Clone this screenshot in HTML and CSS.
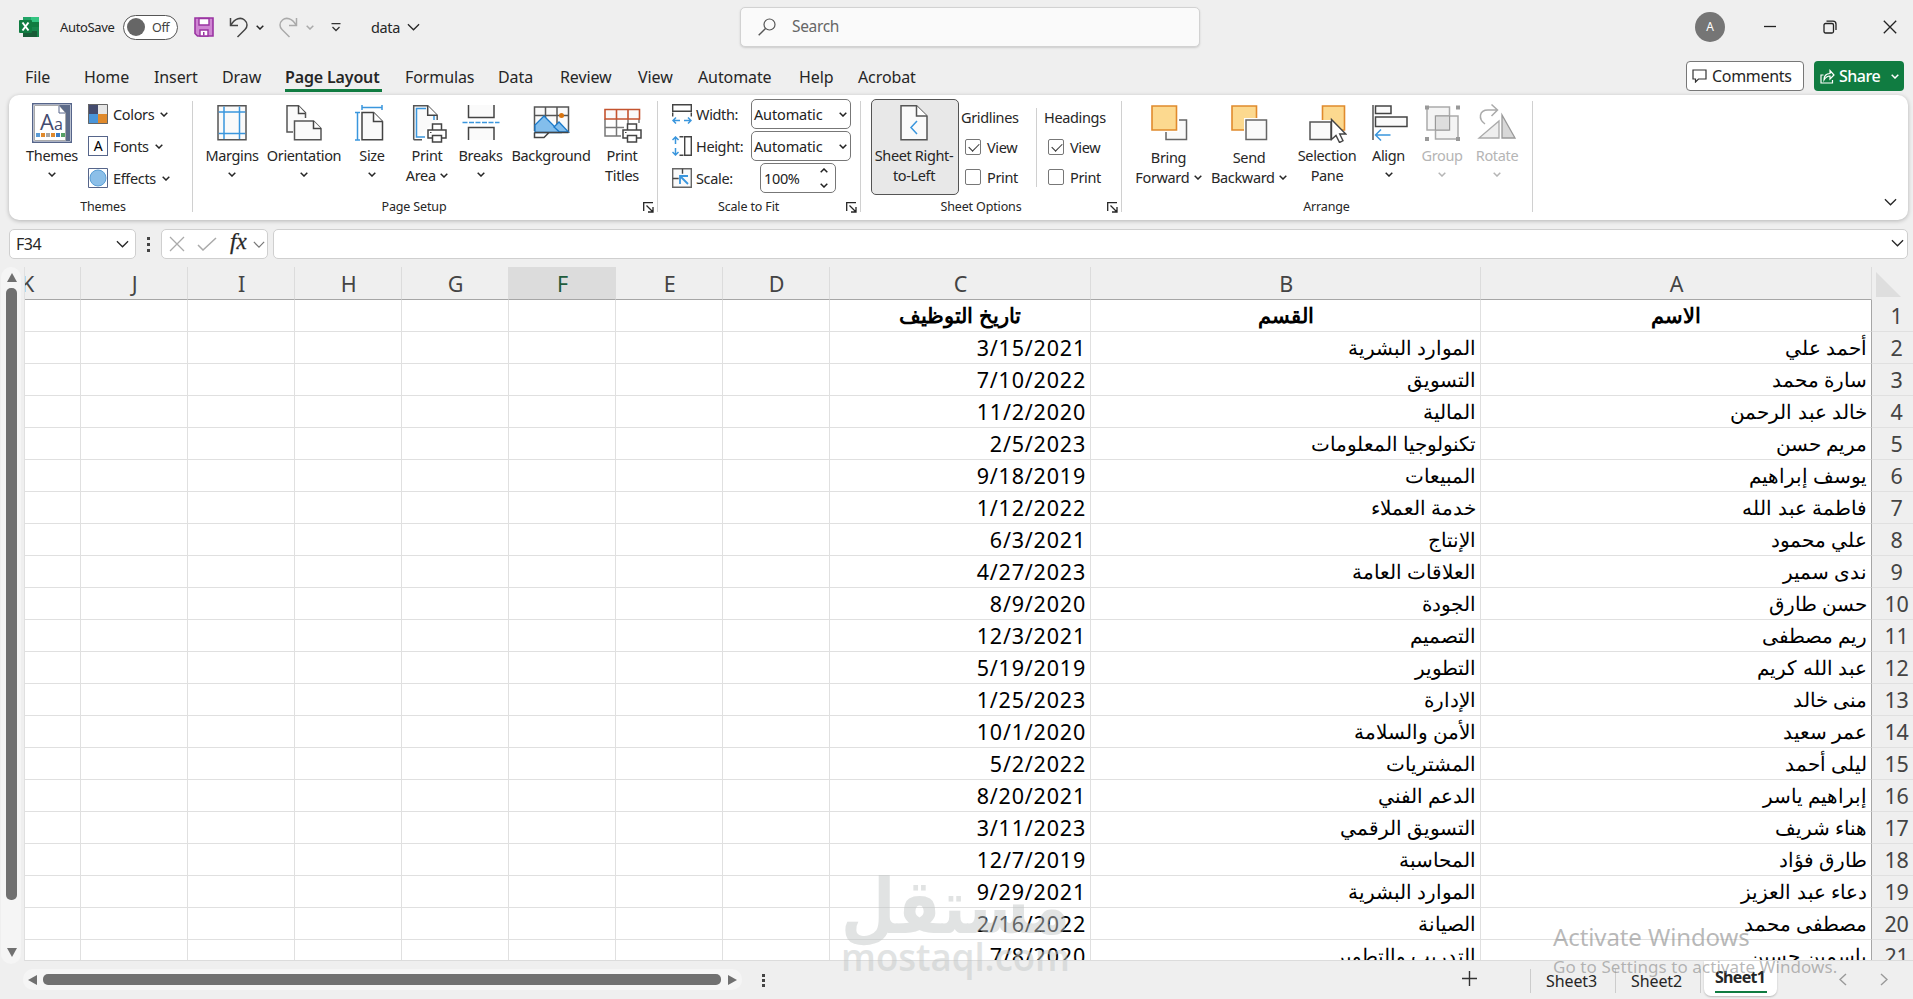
FILE: index.html
```html
<!DOCTYPE html>
<html lang="en">
<head>
    <meta charset="UTF-8">
    <meta name="viewport" content="width=device-width, initial-scale=1.0">
    <title>data - Excel</title>
    <link rel="stylesheet" href="styles.css">
</head>
<body>
    <svg class="defs" width="0" height="0">
        <symbol id="chev" viewBox="0 0 8 5"><path d="M.7.7 4 4 7.3.7" fill="none" stroke="currentColor" stroke-width="1.5"/></symbol>
        <symbol id="chev-lg" viewBox="0 0 14 8"><path d="M1 1l6 6 6-6" fill="none" stroke="currentColor" stroke-width="1.4"/></symbol>
        <symbol id="launcher" viewBox="0 0 11 11"><path d="M.7 9V.7H10M3.5 3.5l6 6M10 5v5H5" fill="none" stroke="currentColor" stroke-width="1.3"/></symbol>
        <symbol id="printer" viewBox="0 0 20 20"><path d="M5.5 1h9v6h-9zM1 7h18v8H1z" fill="#fff" stroke="#444" stroke-width="1.5"/><path d="M5.5 12.5h9V19h-9z" fill="#fff" stroke="#444" stroke-width="1.5"/><path d="M3 9.5h1.5" stroke="#444"/></symbol>
    </svg>

    <div class="titlebar">
        <svg class="logo" width="20" height="20" viewBox="0 0 20 20"><path fill="#21a366" d="M4 0h16v10H4z"/><path fill="#33c481" d="M12 0h8v5h-8z"/><path fill="#107c41" d="M12 5h8v5h-8zM4 10h8v5H4z"/><path fill="#185c37" d="M4 13h16v7H4z"/><path fill="#17864c" d="M12 10h8v10h-2V14h-6z"/><rect y="3" width="13" height="13" rx="1" fill="#107c41"/><path d="M3.500 5.500l6 8M9.500 5.500l-6 8" stroke="#fff" stroke-width="2"/></svg>
        <span class="autosave">AutoSave</span>
        <span class="toggle"><i></i>Off</span>
        <svg class="save" width="20" height="20" viewBox="0 0 20 20"><path d="M1 1h18v18H3.500L1 16.500z" fill="#cf86d3" stroke="#9a35a2" stroke-width="1.600"/><path d="M5 1.500h10V8H5zM6 13h8v6H6z" fill="#fff" stroke="#9a35a2" stroke-width="1.400"/><path d="M9 15h1.500v3.500H9z" fill="#9a35a2"/></svg>
        <svg class="undo" width="20" height="21" viewBox="0 0 20 21"><path d="M1.500 1v7.500H9M2 8C6 1 12 0 15.500 3s3 7 .5 9.500L8.500 20" fill="none" stroke="#444" stroke-width="1.500"/></svg>
        <svg class="undo-chev" width="8" height="5"><use href="#chev"/></svg>
        <svg class="redo" width="20" height="21" viewBox="0 0 20 21"><path d="M18.500 1v7.500H11M18 8C14 1 8 0 4.500 3s-3 7-.5 9.500l7.500 7.500" fill="none" stroke="#aaa" stroke-width="1.500"/></svg>
        <svg class="redo-chev" width="8" height="5"><use href="#chev"/></svg>
        <svg class="customize" width="10" height="9" viewBox="0 0 10 9"><path d="M.5.7h9M1.500 4 5 7.500 8.500 4" fill="none" stroke="#333" stroke-width="1.300"/></svg>
        <span class="doc-name">data</span>
        <svg class="doc-chev" width="13" height="8"><use href="#chev-lg"/></svg>
        <div class="search">
            <svg width="18" height="18" viewBox="0 0 18 18"><circle cx="11.500" cy="6.500" r="5.500" fill="none" stroke="#555" stroke-width="1.200"/><path d="M7.500 10.500.7 17.300" stroke="#555" stroke-width="1.400"/></svg>
            <span>Search</span>
        </div>
        <div class="window-controls">
            <span class="avatar">A</span>
            <svg width="14" height="14" viewBox="0 0 14 14"><path d="M1 6.500h12"/></svg>
            <svg width="14" height="14" viewBox="0 0 14 14"><rect x="1" y="3.500" width="9.500" height="9.500" rx="1.500"/><path d="M3.500 1.200H10a3 3 0 0 1 3 3V10"/></svg>
            <svg width="14" height="14" viewBox="0 0 14 14"><path d="M.8.800l12.400 12.400M13.200.8.800 13.200"/></svg>
        </div>
    </div>

    <div class="tabs">
        <div class="tab-list">
            <span>File</span><span>Home</span><span>Insert</span><span>Draw</span><span class="active"><b>Page Layout</b></span><span>Formulas</span><span>Data</span><span>Review</span><span>View</span><span>Automate</span><span>Help</span><span>Acrobat</span>
        </div>
        <div class="comments">
            <svg width="15" height="14" viewBox="0 0 15 14"><path d="M1 1h13v9H6.500L3.500 13v-3H1z" fill="none" stroke="#333" stroke-width="1.200"/></svg>Comments
        </div>
        <div class="share">
            <svg width="15" height="15" viewBox="0 0 15 15"><path d="M3.500 6H1v8h11.500v-3M4 11c0-4 2-6.500 6-6.500V1.500L14 6l-4 4V7C7 7 5.500 8.500 4 11z" fill="none" stroke="#fff" stroke-width="1.200"/></svg>Share
            <svg class="chev" width="8" height="5"><use href="#chev"/></svg>
        </div>
    </div>

    <div class="ribbon">
        <div class="group g-themes">
            <div class="items">
                <div class="big w-themes">
                    <svg width="40" height="40" viewBox="0 0 40 40"><path d="M.7.700h38.600v38.600H.7z" fill="#fff" stroke="#56658a" stroke-width="1.400"/><path d="M27 2h11v36h-5V10z" fill="#5d6b89"/><path d="M2.500 37.500V2.500H27l6.500 7.500v27.500z" fill="#fff" stroke="#aaa"/><path d="M27 2l7 8v28h4V2z" fill="#5d6b89"/><path d="M27 3v7h6" fill="#fff" stroke="#56658a"/><text x="8" y="27" class="aa">A</text><text x="22" y="27" class="aa-sm">a</text><path d="M4 30h4v4H4z" fill="#5b9bd5"/><path d="M9 30h4v4H9zM19 30h4v4h-4z" fill="#e08a2c"/><path d="M14 30h4v4h-4z" fill="#a5a5a5"/><path d="M24 30h4v4h-4z" fill="#3c7cc4"/><path d="M29 30h4v4h-4z" fill="#56a065"/></svg>
                    <span>Themes</span><svg class="chev" width="8" height="5"><use href="#chev"/></svg>
                </div>
                <div class="small-list">
                    <div><svg width="20" height="20" viewBox="0 0 20 20"><path d="M0 0h10v10H0z" fill="#444b6e"/><path d="M10 0h10v10H10z" fill="#e6e6e6"/><path d="M0 10h10v10H0z" fill="#4a95d9"/><path d="M10 10h10v10H10z" fill="#e08a2c"/><path d="M.5.500h19v19H.500z" fill="none" stroke="#666"/></svg>Colors<svg class="chev" width="8" height="5"><use href="#chev"/></svg></div>
                    <div><span class="font-icon">A</span>Fonts<svg class="chev" width="8" height="5"><use href="#chev"/></svg></div>
                    <div><svg width="20" height="20" viewBox="0 0 20 20"><path d="M.5.500h19v19H.500z" fill="#fff" stroke="#56658a"/><circle cx="10" cy="10" r="8" fill="#8cbfe8" stroke="#5a9fd6"/></svg>Effects<svg class="chev" width="8" height="5"><use href="#chev"/></svg></div>
                </div>
            </div>
            <div class="caption">Themes</div>
        </div>

        <div class="group g-setup">
            <div class="items">
                <div class="big w-margins">
                    <svg width="40" height="40" viewBox="0 0 40 40"><path d="M6 2.700h28v34H6z" fill="#fafafa" stroke="#555" stroke-width="1.500"/><path d="M12 3.500v32.500M27.500 3.500v32.500M6.700 9h26.600M6.700 30.500h26.600" stroke="#3a96dd" stroke-width="1.500"/></svg>
                    <span>Margins</span><svg class="chev" width="8" height="5"><use href="#chev"/></svg>
                </div>
                <div class="big w-orient">
                    <svg width="40" height="40" viewBox="0 0 40 40"><path d="M9 29H3V2.700h11.500l7 7V15" fill="#fafafa" stroke="#555" stroke-width="1.500"/><path d="M14.500 2.700v7.800h7" fill="#fff" stroke="#444" stroke-width="1.500"/><path d="M10.500 18h19l7.500 7.500v11.200H10.500z" fill="#fafafa" stroke="#555" stroke-width="1.500"/><path d="M29.500 18v7.500H37" fill="#fff" stroke="#444" stroke-width="1.500"/></svg>
                    <span>Orientation</span><svg class="chev" width="8" height="5"><use href="#chev"/></svg>
                </div>
                <div class="big w-size">
                    <svg width="40" height="40" viewBox="0 0 40 40"><path d="M10 9.500h11.500l9 9v18.200H10z" fill="#fafafa" stroke="#444" stroke-width="1.500"/><path d="M21.500 9.500v9h9" fill="#fff" stroke="#444" stroke-width="1.500"/><path d="M10 2v5M30 2v5M10 4.500h20M3 9.500h5M3 37h5M5.500 9.500V37" stroke="#3a96dd" stroke-width="1.500"/></svg>
                    <span>Size</span><svg class="chev" width="8" height="5"><use href="#chev"/></svg>
                </div>
                <div class="big w-area">
                    <svg width="40" height="40" viewBox="0 0 40 40"><path d="M6.700 36.700V2.700h14l9.500 9.500V17M6.700 36.700H15" fill="#fafafa" stroke="#555" stroke-width="1.500"/><path d="M19 5.500H9.500V34H18M27 13v4" fill="none" stroke="#3a96dd" stroke-width="1.500"/><path d="M20.700 2.700v9.500h9.500" fill="#fff" stroke="#444" stroke-width="1.500"/><use href="#printer" x="20" y="20" width="20" height="20"/></svg>
                    <span>Print<br>Area <svg class="chev" width="8" height="5"><use href="#chev"/></svg></span>
                </div>
                <div class="big w-breaks">
                    <svg width="40" height="40" viewBox="0 0 40 40"><path d="M7.500 2v12.500H33V2M7.500 37V24.500H33V37" fill="#fafafa" stroke="#444" stroke-width="1.500"/><path d="M1.500 19.500h37" stroke="#3a96dd" stroke-width="1.500" stroke-dasharray="5 1.500"/></svg>
                    <span>Breaks</span><svg class="chev" width="8" height="5"><use href="#chev"/></svg>
                </div>
                <div class="big w-bg">
                    <svg width="40" height="40" viewBox="0 0 40 40"><path d="M3.500 28V4h34v25.500M14.500 4v12M26 4v18M3.500 12.500h34" fill="#fafafa" stroke="#555" stroke-width="1.500"/><path d="M4 29V22l9-9 16.500 16.500H4z" fill="#83beec" stroke="#1979ca" stroke-width="1.300"/><path d="M23 24l5-5 9.500 10h-9z" fill="#83beec" stroke="#1979ca" stroke-width="1.300"/><circle cx="30.500" cy="12.500" r="2.500" fill="#d8730e"/><path d="M3.500 29.500v5H13l5-5M3.500 29.500h34" fill="none" stroke="#444" stroke-width="1.500"/></svg>
                    <span>Background</span>
                </div>
                <div class="big w-titles">
                    <svg width="40" height="40" viewBox="0 0 40 40"><path d="M3 16v17h16M3 24.500h19M14.500 16v17M26 16v5M37 16v4" fill="none" stroke="#777" stroke-width="1.500"/><path d="M3 6.500h34.500V16H3zM14.500 6.500V16M26 6.500V16" fill="#fafafa" stroke="#c4532f" stroke-width="1.600"/><use href="#printer" x="20" y="20" width="20" height="20"/></svg>
                    <span>Print<br>Titles</span>
                </div>
            </div>
            <div class="caption">Page Setup</div>
            <svg class="launcher" width="11" height="11"><use href="#launcher"/></svg>
        </div>

        <div class="group g-scale">
            <div class="scale-row">
                <svg width="20" height="20" viewBox="0 0 20 20"><path d="M.7.700h18.600v6.600H.700z" fill="#fff" stroke="#444" stroke-width="1.400"/><path d="M.7 8.500v4M19.300 8.500v4" stroke="#444" stroke-width="1.400"/><path d="M1 16.500h7M12 16.500h7M4 13.500l-3 3 3 3M16 13.500l3 3-3 3" fill="none" stroke="#3a96dd" stroke-width="1.500"/></svg>
                <span class="lbl">Width:</span><span class="combo">Automatic<svg class="chev" width="8" height="5"><use href="#chev"/></svg></span>
            </div>
            <div class="scale-row">
                <svg width="20" height="20" viewBox="0 0 20 20"><path d="M12.700.700h6.600v18.600h-6.600z" fill="#fff" stroke="#444" stroke-width="1.400"/><path d="M7.500.700h4M7.500 19.300h4" stroke="#444" stroke-width="1.400"/><path d="M3.500 1v7M3.500 12v7M.5 4l3-3 3 3M.5 16l3 3 3-3" fill="none" stroke="#3a96dd" stroke-width="1.500"/></svg>
                <span class="lbl">Height:</span><span class="combo">Automatic<svg class="chev" width="8" height="5"><use href="#chev"/></svg></span>
            </div>
            <div class="scale-row">
                <svg width="20" height="20" viewBox="0 0 20 20"><path d="M.7.700h18.600v18.600H.700z" fill="#fafafa" stroke="#666" stroke-width="1.400"/><path d="M.7 10.500h6M10.500.700v5" stroke="#444" stroke-width="1.400"/><path d="M8 16V8h8M8 8l8 8" fill="none" stroke="#3a96dd" stroke-width="1.800"/></svg>
                <span class="lbl">Scale:</span>
                <span class="spin">100%<span class="arrows"><svg class="chev up" width="8" height="5"><use href="#chev"/></svg><svg class="chev" width="8" height="5"><use href="#chev"/></svg></span></span>
            </div>
            <div class="caption">Scale to Fit</div>
            <svg class="launcher" width="11" height="11"><use href="#launcher"/></svg>
        </div>

        <div class="group g-sheet">
            <div class="items">
                <div class="big rtl-toggle">
                    <svg width="40" height="40" viewBox="0 0 40 40"><path d="M7 2.700h15.500L33 13v23.700H7z" fill="#fafafa" stroke="#555" stroke-width="1.500"/><path d="M22.500 2.700V13H33" fill="#fff" stroke="#555" stroke-width="1.500"/><path d="M23 18l-6 6.500 6 6.500" fill="none" stroke="#3a96dd" stroke-width="1.500"/></svg>
                    <span>Sheet Right-<br>to-Left</span>
                </div>
                <div class="checks grid-checks">
                    <strong>Gridlines</strong>
                    <div><i class="on"></i>View</div>
                    <div><i></i>Print</div>
                </div>
                <div class="checks head-checks">
                    <strong>Headings</strong>
                    <div><i class="on"></i>View</div>
                    <div><i></i>Print</div>
                </div>
            </div>
            <div class="caption">Sheet Options</div>
            <svg class="launcher" width="11" height="11"><use href="#launcher"/></svg>
        </div>

        <div class="group g-arrange">
            <div class="items">
                <div class="big low w-bring">
                    <svg width="40" height="40" viewBox="0 0 40 40"><path d="M17 17h20.500v19.500H17z" fill="#fafafa" stroke="#666" stroke-width="1.500"/><path d="M2 1h28v28H2z" fill="#fff"/><path d="M3 3h24.500v24H3z" fill="#fcd98f" stroke="#e08a2c" stroke-width="1.600"/></svg>
                    <span>Bring<br>Forward <svg class="chev" width="8" height="5"><use href="#chev"/></svg></span>
                </div>
                <div class="big low w-send">
                    <svg width="40" height="40" viewBox="0 0 40 40"><path d="M3 3h24.500v24H3z" fill="#fcd98f" stroke="#e08a2c" stroke-width="1.600"/><path d="M15 15h22v22H15z" fill="#fff"/><path d="M17 17h20.500v19.500H17z" fill="#fafafa" stroke="#666" stroke-width="1.500"/></svg>
                    <span>Send<br>Backward <svg class="chev" width="8" height="5"><use href="#chev"/></svg></span>
                </div>
                <div class="big w-select">
                    <svg width="40" height="40" viewBox="0 0 40 40"><path d="M15.500 3H37.500v24H15.500z" fill="#fcd98f" stroke="#e08a2c" stroke-width="1.600"/><path d="M1 17h24v21H1z" fill="#fff"/><path d="M3 19h21v17.500H3z" fill="#fafafa" stroke="#555" stroke-width="1.500"/><path d="M24.500 16.500v20l4.500-4 3.500 7 3.500-1.700-3.300-6.800h6z" fill="#fff" stroke="#444" stroke-width="1.400"/></svg>
                    <span>Selection<br>Pane</span>
                </div>
                <div class="big w-align">
                    <svg width="40" height="40" viewBox="0 0 40 40"><path d="M4 2v35" stroke="#555" stroke-width="1.500"/><path d="M6.500 3h15.500v7.500H6.500zM6.500 14H38v9.500H6.500z" fill="#fafafa" stroke="#444" stroke-width="1.500"/><path d="M6.500 32h15M12 26.500 6.500 32l5.500 5.500" fill="none" stroke="#3a96dd" stroke-width="1.500"/></svg>
                    <span>Align</span><svg class="chev" width="8" height="5"><use href="#chev"/></svg>
                </div>
                <div class="big w-group off">
                    <svg width="40" height="40" viewBox="0 0 40 40"><path d="M5 4h22.500v23H5zM13.500 13H36v23H13.500z" fill="#f0f0f0" fill-opacity=".7" stroke="#aaa" stroke-width="1.500"/><path d="M13.500 13h14v14h-14z" fill="#dedede" stroke="#999"/><path d="M3 2.500h4v4H3zM34 2.500h4v4h-4zM3 34h4v4H3zM34 34h4v4h-4z" fill="#999"/></svg>
                    <span>Group</span><svg class="chev" width="8" height="5"><use href="#chev"/></svg>
                </div>
                <div class="big w-rotate off">
                    <svg width="40" height="40" viewBox="0 0 40 40"><path d="M8 21C1 16 2 7 11 7h9M14.500 1.500 20.500 7l-6 6" fill="none" stroke="#aaa" stroke-width="1.500"/><path d="M22 18v17H2z" fill="#eee" stroke="#aaa" stroke-width="1.300"/><path d="M25 12v23h13z" fill="#d8d8d8" stroke="#999" stroke-width="1.300"/></svg>
                    <span>Rotate</span><svg class="chev" width="8" height="5"><use href="#chev"/></svg>
                </div>
            </div>
            <div class="caption">Arrange</div>
        </div>
        <svg class="collapse" width="13" height="8"><use href="#chev-lg"/></svg>
    </div>

    <div class="formula-bar">
        <div class="name-box">F34<svg width="13" height="8"><use href="#chev-lg"/></svg></div>
        <div class="dots"><i></i><i></i><i></i></div>
        <div class="fx-box">
            <svg width="16" height="16" viewBox="0 0 16 16"><path d="M1 1l14 14M15 1 1 15" stroke="#aaa" stroke-width="1.300"/></svg>
            <svg width="20" height="14" viewBox="0 0 20 14"><path d="M1 8l5 5L19 1" fill="none" stroke="#aaa" stroke-width="1.500"/></svg>
            <em>fx</em>
            <svg class="fx-chev" width="12" height="7"><use href="#chev-lg"/></svg>
        </div>
        <div class="formula"><svg width="13" height="8"><use href="#chev-lg"/></svg></div>
    </div>

    <div class="sheet">
        <div class="vscroll"><i class="tri up"></i><i class="thumb"></i><i class="tri down"></i></div>
        <div class="grid">
            <table>
                <colgroup>
                    <col><col><col><col><col><col><col><col>
                    <col class="col-c"><col class="col-b"><col class="col-a"><col class="col-n">
                </colgroup>
                <thead>
                    <tr><th>K</th><th>J</th><th>I</th><th>H</th><th>G</th><th class="current">F</th><th>E</th><th>D</th><th>C</th><th>B</th><th>A</th><th class="corner"><svg width="25" height="25" viewBox="0 0 25 25"><path d="M0 0v25h25z" fill="#dedede"/></svg></th></tr>
                </thead>
                <tbody id="rows"></tbody>
            </table>
        </div>
    </div>

    <div class="footer">
        <div class="hscroll"><i class="tri left"></i><i class="thumb"></i><i class="tri right"></i></div>
        <div class="dots"><i></i><i></i><i></i></div>
        <svg class="plus" width="15" height="15" viewBox="0 0 15 15"><path d="M7.500 0v15M0 7.500h15" stroke="#333" stroke-width="1.400"/></svg>
        <div class="sheet-tab">Sheet3</div>
        <div class="sheet-tab">Sheet2</div>
        <div class="sheet-tab active"><b>Sheet1</b></div>
        <svg class="prev" width="8" height="13" viewBox="0 0 8 13"><path d="M7 1 1 6.500l6 5.500" fill="none" stroke="#999" stroke-width="1.400"/></svg>
        <svg class="next" width="8" height="13" viewBox="0 0 8 13"><path d="M1 1l6 5.500L1 12" fill="none" stroke="#999" stroke-width="1.400"/></svg>
    </div>

    <div class="watermark">
        <svg width="240" height="125" viewBox="0 0 240 125"><text x="5" y="68" class="wm-ar" textLength="229" lengthAdjust="spacingAndGlyphs">مستقل</text><text x="5" y="106" class="wm-en" textLength="229" lengthAdjust="spacingAndGlyphs">mostaql.com</text></svg>
    </div>
    <div class="activate">
        <div class="activate-title">Activate Windows</div>
        <div class="activate-text">Go to Settings to activate Windows.</div>
    </div>

    <script>
        var data = [
            ['الاسم', 'القسم', 'تاريخ التوظيف'],
            ['أحمد علي', 'الموارد البشرية', '3/15/2021'],
            ['سارة محمد', 'التسويق', '7/10/2022'],
            ['خالد عبد الرحمن', 'المالية', '11/2/2020'],
            ['مريم حسن', 'تكنولوجيا المعلومات', '2/5/2023'],
            ['يوسف إبراهيم', 'المبيعات', '9/18/2019'],
            ['فاطمة عبد الله', 'خدمة العملاء', '1/12/2022'],
            ['علي محمود', 'الإنتاج', '6/3/2021'],
            ['ندى سمير', 'العلاقات العامة', '4/27/2023'],
            ['حسن طارق', 'الجودة', '8/9/2020'],
            ['ريم مصطفى', 'التصميم', '12/3/2021'],
            ['عبد الله كريم', 'التطوير', '5/19/2019'],
            ['منى خالد', 'الإدارة', '1/25/2023'],
            ['عمر سعيد', 'الأمن والسلامة', '10/1/2020'],
            ['ليلى أحمد', 'المشتريات', '5/2/2022'],
            ['إبراهيم ياسر', 'الدعم الفني', '8/20/2021'],
            ['هناء شريف', 'التسويق الرقمي', '3/11/2023'],
            ['طارق فؤاد', 'المحاسبة', '12/7/2019'],
            ['دعاء عبد العزيز', 'الموارد البشرية', '9/29/2021'],
            ['مصطفى محمد', 'الصيانة', '2/16/2022'],
            ['ياسمين حسين', 'التدريب والتطوير', '7/8/2020']
        ];
        var html = '';
        data.forEach(function (row, i) {
            html += '<tr' + (i === 0 ? ' class="head"' : '') + '>' + '<td></td>'.repeat(8) +
                '<td class="date">' + row[2] + '</td>' +
                '<td class="ar">' + row[1] + '</td>' +
                '<td class="ar last">' + row[0] + '</td>' +
                '<td class="num">' + (i + 1) + '</td></tr>';
        });
        document.getElementById('rows').innerHTML = html;
    </script>
</body>
</html>
```
FILE: styles.css
```css
* {
    box-sizing: border-box;
}
body {
    margin: 0;
    width: 1913px;
    height: 999px;
    overflow: hidden;
    position: relative;
    display: flex;
    flex-direction: column;
    background: #efefef;
    color: #262626;
    font-family: "Noto Sans", "Open Sans", sans-serif;
    font-size: 14.5px;
    letter-spacing: -0.35px;
}
svg {
    display: block;
    flex: none;
}
.defs {
    position: absolute;
}

/* title bar */
.titlebar {
    height: 54px;
    display: flex;
    align-items: center;
    padding-left: 19px;
    flex: none;
}
.titlebar > * {
    flex: none;
}
.autosave {
    width: 63px;
    margin-left: 21px;
    font-size: 13px;
    letter-spacing: -0.35px;
}
.toggle {
    width: 55px;
    height: 25px;
    border: 1px solid #555;
    border-radius: 13px;
    background: #fff;
    display: flex;
    align-items: center;
    font-size: 12.5px;
    color: #444;
}
.toggle i {
    width: 18px;
    height: 18px;
    border-radius: 50%;
    background: #666;
    margin: 0 7px 0 3px;
}
.save {
    margin-left: 16px;
}
.undo {
    margin-left: 15px;
}
.undo-chev {
    margin-left: 7px;
}
.redo {
    margin-left: 14px;
}
.redo-chev {
    margin-left: 8px;
    color: #aaa;
}
.customize {
    margin-left: 17px;
}
.doc-name {
    width: 36px;
    margin-left: 30px;
}
.search {
    width: 460px;
    height: 40px;
    margin-left: 320px;
    display: flex;
    align-items: center;
    padding-left: 17px;
    border: 1px solid #d2d2d2;
    border-radius: 5px;
    background: #fafafa;
    box-shadow: 0 1px 2px #ccc;
    font-size: 15.5px;
    color: #666;
    margin-top: -1px;
}
.search span {
    margin-left: 16px;
    margin-top: -1px;
}
.window-controls {
    display: flex;
    align-items: center;
    margin-left: 495px;
}
.window-controls svg {
    fill: none;
    stroke: #222;
    stroke-width: 1.3;
    margin-right: 46px;
}
.avatar {
    width: 30px;
    height: 30px;
    border-radius: 50%;
    background: #757575;
    color: #fff;
    font-size: 12px;
    line-height: 30px;
    text-align: center;
    margin-right: 38px;
}

/* ribbon tabs */
.tabs {
    height: 40px;
    flex: none;
    display: flex;
    padding-top: 7px;
}
.tab-list {
    display: grid;
    grid-template-columns: 59px 70px 68px 63px 120px 93px 62px 78px 60px 101px 59px 60px;
    margin-left: 25px;
    width: 1661px;
    font-size: 16px;
    line-height: 32px;
    letter-spacing: -0.1px;
}
.tab-list b {
    font-weight: 600;
    letter-spacing: -0.15px;
    display: inline-block;
    width: 97px;
    height: 31px;
    border-bottom: 3px solid #107c41;
}
.comments,
.share {
    height: 30px;
    display: flex;
    align-items: center;
    border-radius: 4px;
    font-size: 16px;
    letter-spacing: -0.3px;
}
.comments {
    width: 118px;
    border: 1px solid #777;
    background: #fff;
    padding-left: 5px;
}
.comments svg {
    margin-right: 5px;
}
.share {
    width: 90px;
    margin-left: 10px;
    background: #107c41;
    color: #fff;
    padding-left: 6px;
    font-weight: 500;
    letter-spacing: -0.5px;
}
.share svg {
    margin-right: 4px;
}
.share .chev {
    margin: 0 5px 0 auto;
}

/* ribbon */
.ribbon {
    height: 125px;
    flex: none;
    margin: 1px 5px 0 9px;
    background: #fff;
    border-radius: 10px;
    box-shadow: 0 1px 4px rgba(0, 0, 0, 0.25);
    display: flex;
    padding-top: 4px;
}
.group {
    position: relative;
    height: 114px;
}
.group::after {
    content: "";
    position: absolute;
    right: 0;
    top: 2px;
    width: 1px;
    height: 111px;
    background: #d0d0d0;
}
.items {
    display: flex;
    height: 97px;
}
.big {
    display: flex;
    flex-direction: column;
    align-items: center;
    text-align: center;
    line-height: 20px;
    padding-top: 4px;
    white-space: nowrap;
}
.big span {
    margin-top: 2px;
}
.big.low span {
    margin-top: 4px;
}
.big > .chev {
    margin-top: 7px;
}
.big span .chev {
    display: inline-block;
    vertical-align: 3px;
    margin-left: 1px;
}
.off {
    color: #b5b5b5;
}
.aa {
    font: 22px "Open Sans", sans-serif;
    fill: #444b6e;
}
.aa-sm {
    font: 16px "Open Sans", sans-serif;
    fill: #444b6e;
}
.caption {
    position: absolute;
    top: 98px;
    left: 0;
    right: 0;
    text-align: center;
    font-size: 12.5px;
    line-height: 20px;
    letter-spacing: -0.15px;
}
.launcher {
    position: absolute;
    right: 4px;
    top: 103px;
}
.g-themes { width: 184px; }
.g-themes .caption { left: 4px; }
.g-setup { width: 465px; padding-left: 9px; }
.g-setup .caption { right: 23px; }
.g-scale { width: 203px; padding-left: 14px; }
.g-scale .caption { right: 22px; }
.g-sheet { width: 261px; padding-left: 10px; }
.g-sheet .caption { right: 21px; }
.g-arrange { width: 411px; padding-left: 7px; }
.g-arrange .caption { right: 2px; }
.w-themes { width: 86px; }
.w-margins { width: 60px; }
.w-orient { width: 84px; }
.w-size { width: 52px; }
.w-area { width: 58px; }
.w-breaks { width: 49px; }
.w-bg { width: 92px; }
.w-titles { width: 50px; }
.w-bring { width: 79px; }
.w-send { width: 82px; }
.w-select { width: 74px; }
.w-align { width: 49px; }
.w-group { width: 58px; }
.w-rotate { width: 52px; }
.small-list {
    margin: -1px 0 0 -7px;
}
.small-list div {
    display: flex;
    align-items: center;
    height: 32px;
}
.small-list div > :first-child {
    margin-right: 5px;
}
.small-list .chev {
    margin-left: 6px;
}
.font-icon {
    width: 20px;
    height: 20px;
    border: 1px solid #56658a;
    background: #fff;
    font-size: 14px;
    line-height: 18px;
    text-align: center;
    color: #000;
}
.g-scale {
    margin-top: -1px;
}
.g-scale::after {
    top: 3px;
}
.g-scale .caption {
    top: 99px;
}
.g-scale .launcher {
    top: 104px;
}
.scale-row {
    display: flex;
    align-items: center;
    height: 32px;
}
.lbl {
    width: 55px;
    margin-left: 4px;
    white-space: nowrap;
}
.combo,
.spin {
    height: 30px;
    border: 1px solid #777;
    border-radius: 5px;
    display: flex;
    align-items: center;
    justify-content: space-between;
    color: #222;
}
.combo {
    width: 100px;
    padding: 0 3px 0 2px;
    letter-spacing: -0.15px;
}
.spin {
    width: 76px;
    margin-left: 9px;
    padding: 0 7px 0 3px;
}
.arrows svg + svg {
    margin-top: 10px;
}
.up {
    transform: rotate(180deg);
}
.rtl-toggle {
    width: 88px;
    height: 96px;
    background: #e8e8e8;
    border: 1px solid #555;
    border-radius: 5px;
    padding-top: 3px;
    padding-right: 2px;
}
.checks {
    width: 76px;
    margin-top: 9px;
    height: 79px;
    padding-left: 6px;
}
.checks strong {
    display: block;
    font-weight: 400;
    line-height: 20px;
    margin: -1px 0 7px -4px;
    height: 18px;
    white-space: nowrap;
}
.checks div {
    display: flex;
    align-items: center;
    height: 30px;
}
.checks i {
    width: 16px;
    height: 16px;
    border: 1px solid #777;
    border-radius: 2px;
    margin-right: 6px;
}
.checks .on::before {
    content: "";
    display: block;
    width: 9px;
    height: 5px;
    margin: 3px 0 0 3px;
    border: solid #333;
    border-width: 0 0 1.5px 1.5px;
    transform: rotate(-45deg);
}
.grid-checks {
    border-right: 1px solid #d0d0d0;
    width: 78px;
}
.head-checks {
    padding-left: 11px;
}
.collapse {
    margin: 99px 0 0 351px;
}

/* formula bar */
.formula-bar {
    height: 30px;
    flex: none;
    display: flex;
    margin: 9px 5px 0 9px;
}
.name-box,
.fx-box,
.formula {
    background: #fff;
    border: 1px solid #cfcfcf;
    border-radius: 5px;
    display: flex;
    align-items: center;
}
.name-box {
    width: 127px;
    justify-content: space-between;
    padding: 0 6px;
    font-size: 16px;
    letter-spacing: -0.5px;
}
.dots {
    display: flex;
    flex-direction: column;
    gap: 3px;
}
.dots i {
    width: 3px;
    height: 3px;
    background: #444;
}
.formula-bar .dots {
    margin: 8px 11px 0;
}
.fx-box {
    width: 107px;
    padding-left: 7px;
}
.fx-box svg + svg {
    margin-left: 12px;
}
.fx-box em {
    font: italic 23px "Liberation Serif", serif;
    letter-spacing: 0;
    margin: -4px 0 0 13px;
    width: 18px;
    -webkit-text-stroke: 0.3px #333;
}
.fx-box .fx-chev {
    margin-left: 5px;
    color: #777;
}
.formula {
    flex: 1;
    margin-left: 5px;
    justify-content: flex-end;
    padding: 0 3px 2px 0;
}

/* sheet */
.sheet {
    display: flex;
    height: 694px;
    flex: none;
    margin-top: 8px;
}
.vscroll {
    width: 20px;
    height: 697px;
    margin: 0 2px 0 1px;
    padding: 6px 0 0 1px;
    background: #f5f5f5;
    border-radius: 10px;
    display: flex;
    flex-direction: column;
    align-items: center;
    flex: none;
}
.vscroll .thumb {
    width: 11px;
    height: 612px;
    border-radius: 5px;
    background: #707070;
    margin: 6px 0 48px;
}
.tri.up {
    transform: none;
    border: 5.5px solid transparent;
    border-top: 0;
    border-bottom: 9px solid #707070;
}
.tri.down {
    border: 5.5px solid transparent;
    border-bottom: 0;
    border-top: 9px solid #707070;
}
.grid {
    width: 1889px;
    margin-left: 1px;
    overflow: hidden;
    display: flex;
    justify-content: flex-end;
    border-left: 1px solid #e0e0e0;
    border-bottom: 1px solid #dcdcdc;
}
table {
    width: 1939px;
    flex: none;
    table-layout: fixed;
    border-spacing: 0;
    font-size: 21.5px;
    letter-spacing: -0.3px;
    height: 705px;
}
.col-c { width: 261px; }
.col-b { width: 390px; }
.col-a { width: 391px; }
.col-n { width: 41px; }
th,
td {
    padding: 0;
    line-height: 30px;
    white-space: nowrap;
    overflow: hidden;
}
th {
    height: 33px;
    padding-top: 2px;
    padding-left: 1px;
    font-weight: 400;
    color: #444;
    border-right: 1px solid #dcdcdc;
    border-bottom: 1px solid #a6a6a6;
}
th.current {
    background: #dcdcdc;
    color: #1e5c3c;
}
th.corner {
    border: 0;
    padding-left: 4px;
}
td {
    height: 32px;
    background: #fff;
    color: #000;
    border-right: 1px solid #e0e0e0;
    border-bottom: 1px solid #e0e0e0;
}
td.date {
    text-align: right;
    padding-right: 4px;
    letter-spacing: 0.8px;
}
td.ar {
    direction: rtl;
    text-align: right;
    padding-right: 4px;
    padding-bottom: 2px;
    line-height: 28px;
    letter-spacing: 0;
    font-size: 20.3px;
}
td.last {
    border-right-color: #a6a6a6;
}
.head td.date,
.head td.ar {
    direction: rtl;
    text-align: center;
    padding: 0 0 2px;
    line-height: 28px;
    font-size: 21px;
    font-weight: 700;
    letter-spacing: 0;
}
td.num {
    background: #efefef;
    color: #444;
    text-align: center;
    border-right: 0;
    padding-left: 8px;
}

/* bottom bar */
.footer {
    flex: 1;
    display: flex;
    align-items: flex-start;
}
.hscroll {
    width: 719px;
    height: 21px;
    margin: 8px 0 0 23px;
    background: #f5f5f5;
    border-radius: 10px;
    display: flex;
    align-items: center;
    padding-left: 5px;
}
.hscroll .thumb {
    width: 678px;
    height: 11px;
    border-radius: 5px;
    background: #707070;
    margin: 0 7px 0 6px;
}
.tri.left {
    border: 5.5px solid transparent;
    border-left: 0;
    border-right: 9px solid #707070;
}
.tri.right {
    border: 5.5px solid transparent;
    border-right: 0;
    border-left: 9px solid #707070;
}
.footer .dots {
    margin: 13px 0 0 20px;
    gap: 2px;
}
.plus {
    margin: 10px 53px 0 697px;
}
.sheet-tab {
    width: 85px;
    height: 24px;
    margin-top: 8px;
    border-left: 1px solid #ccc;
    padding-left: 15px;
    font-size: 16px;
    line-height: 24px;
    letter-spacing: -0.1px;
}
.sheet-tab.active {
    width: 78px;
    height: 35px;
    margin-top: 0;
    padding-left: 4px;
}
.sheet-tab.active {
    background: linear-gradient(#ccc, #ccc) 0 8px / 1px 24px no-repeat;
    border: 0;
}
.sheet-tab.active b {
    display: block;
    width: 73px;
    height: 35px;
    background: #fff;
    border-radius: 0 0 7px 7px;
    box-shadow: 0 1px 2px #bbb;
    padding-left: 11px;
    line-height: 33px;
    letter-spacing: -0.7px;
    position: relative;
}
.sheet-tab.active b::after {
    content: "";
    position: absolute;
    left: 11px;
    right: 10px;
    bottom: 3px;
    height: 2px;
    background: #107c41;
}
.prev {
    margin: 12px 0 0 61px;
}
.next {
    margin: 12px 0 0 33px;
}

/* overlays */
.watermark {
    position: absolute;
    left: 836px;
    top: 865px;
    opacity: 0.5;
}
.watermark text {
    fill: #c4c8c8;
    font-family: "DejaVu Sans", sans-serif;
    font-weight: 700;
    letter-spacing: 0;
}
.watermark .wm-ar {
    font-size: 76px;
}
.watermark .wm-en {
    font-family: "Open Sans", sans-serif;
    font-weight: 600;
    font-size: 38px;
}
.activate {
    position: absolute;
    left: 1553px;
    top: 919px;
    color: rgba(125, 125, 125, 0.55);
    white-space: nowrap;
}
.activate-title {
    font-size: 24px;
    line-height: 36px;
    letter-spacing: -0.1px;
}
.activate-text {
    font-size: 17px;
    line-height: 23px;
    letter-spacing: 0.08px;
}
```
